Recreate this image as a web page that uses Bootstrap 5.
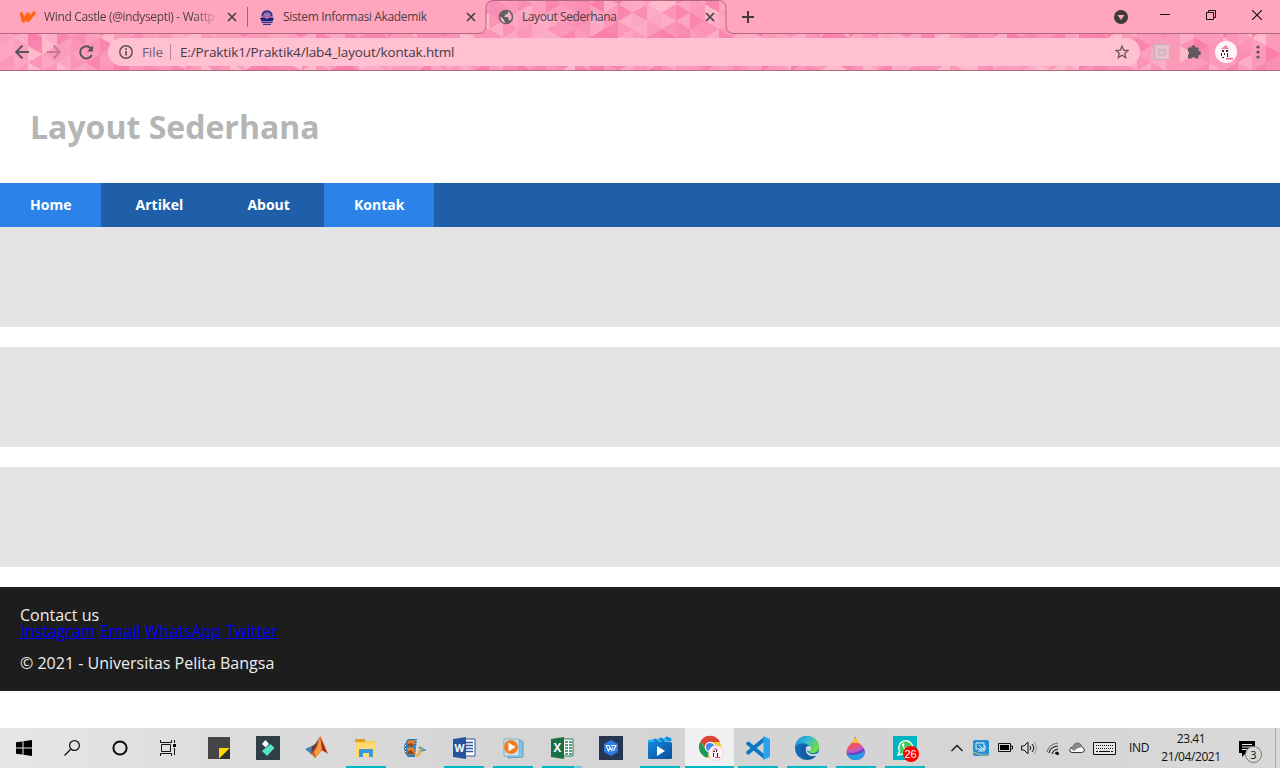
<!DOCTYPE html>
<html lang="id">
<head>
<meta charset="utf-8">
<title>Layout Sederhana</title>
<link href="https://cdn.jsdelivr.net/npm/bootstrap@5.3.0/dist/css/bootstrap.min.css" rel="stylesheet">
<style>
body{width:1280px;height:768px;overflow:hidden;font-family:"Open Sans",sans-serif;background:#fff;color:#000}
svg{display:block;flex:none}
.chrome-ui{height:71px;background:#fc9cba;color:#4a3f45;font-family:"Open Sans",sans-serif;font-size:12px}
.theme-art{z-index:0}
.strip,.toolbar{position:relative;z-index:1}
.strip{height:34px}
.toolbar{height:36px}
.tab-a{width:247px;padding-left:20px}
.tab-b{width:239px;padding-left:11px}
.tab-c{width:240px;padding-left:11px}
.tab-text{white-space:nowrap;overflow:hidden;line-height:18px;letter-spacing:-.34px}
.tab-c .tab-text{letter-spacing:-.42px}
.fade-text{width:175px;-webkit-mask-image:linear-gradient(90deg,#000 150px,transparent 175px)}
.tab-sep{width:1px;height:20px;background:#a0627a}
.omni{width:1032px;height:28px;border-radius:14px;background:#ffc0d2;font-size:13.5px;line-height:28px}
.omni-sep{width:1px;height:16px;background:#b58796}
.page-title{font-size:32px;font-weight:700;color:#b5b5b5;line-height:32px;padding:40px 30px;height:112px}
.site-nav{height:44px;background:#1f5faa;gap:4.2px}
.site-nav a{height:44px;line-height:44px;padding:0 30px;font-size:14px;font-weight:700;color:#fff;text-decoration:none}
.site-nav a.on{background:#2b83ea}
.box{height:100px;background:#e4e4e4;margin-bottom:20px}
.foot{height:104px;padding:20px;background:#1d1d1d;color:#eee;font-size:16px;line-height:16px}
.foot a{color:#00f;text-decoration:underline}
.foot p{margin:16px 0 0}
.taskbar{height:40px;background:linear-gradient(90deg,#e6e6e6,#dedede 15%,#d6d6d6 35%,#d3d3d3 60%,#d8d8d8);color:#111;font-size:12px}
.sys{width:48px}
.app{width:49px;height:40px;position:relative}
.app.run::after{content:"";position:absolute;bottom:0;left:4.5px;width:40px;height:2px;background:#00b7c3}
.app.multi::after{background:linear-gradient(90deg,#00b7c3 32px,#62d2d6 32px)}
.app.live{background:#f0f0f0}
.app.live::after{left:0;width:49px}
.wa-count{position:absolute;left:22px;top:18px;width:16px;height:16px;border-radius:50%;background:#f00;color:#fff;font:11px/16px "Liberation Sans",sans-serif;text-align:center}
.w24{width:24px}.w30{width:30px}
.clock{width:64px;line-height:18px;letter-spacing:-.42px}
.note-count{position:absolute;left:22px;top:18px;width:17px;height:17px;border:1px solid #777;border-radius:50%;background:#d8d8d8;font-size:11px;line-height:15px;text-align:center}
</style>
</head>
<body class="d-flex flex-column m-0">
<header class="chrome-ui position-relative flex-shrink-0">
  <svg class="theme-art position-absolute top-0 start-0" width="1280" height="71">
    <g id="facets" shape-rendering="crispEdges"></g>
    <path d="M-2-2H1282V33.5H734q-8 0-8-8V8.5q0-8-8-8H494q-8 0-8 8V25.5q0 8-8 8H-2z" fill="#ffa6be"/>
    <path d="M1282 33.5H734q-8 0-8-8V8.5q0-8-8-8H494q-8 0-8 8V25.5q0 8-8 8H-2M0 70.5H1280" fill="none" stroke="#b36882"/>
  </svg>
  <div class="strip d-flex align-items-center">
    <div class="tab-a d-flex align-items-center">
      <svg width="16" height="16" viewBox="0 0 16 16"><path d="M1.500 5L3.500 12L8 5L8 11.500L14 4" fill="none" stroke="#ff6512" stroke-width="3.500" stroke-linejoin="round" stroke-linecap="round"/></svg>
      <span class="tab-text fade-text ms-2">Wind Castle (@indysepti) - Wattp</span>
      <svg class="ms-2" width="10" height="10"><path d="M1 1L9 9M9 1L1 9" stroke="#444" stroke-width="1.7"/></svg>
    </div>
    <div class="tab-sep"></div>
    <div class="tab-b d-flex align-items-center">
      <svg width="16" height="16" viewBox="0 0 16 16"><path d="M2 14V7q0-5 6-6.500Q14 2 14 7v7z" fill="#8d7fc0"/><path d="M3.500 7q0-4.500 4.500-4.500T12.500 7" stroke="#253080" fill="none" stroke-width="1.500"/><path d="M7 3.500h2V6H7zM4 7h2v2H4zM10 7h2v2h-2z" fill="#db496b"/><path d="M1 9q4-1 7 1q3-2 7-1l-1.500 3h-11z" fill="#202478"/><path d="M3 13.500h10M4 15.300h8" stroke="#3b3788" stroke-width="1.200"/></svg>
      <span class="tab-text ms-2" style="width:175px">Sistem Informasi Akademik</span>
      <svg class="ms-2" width="10" height="10"><path d="M1 1L9 9M9 1L1 9" stroke="#444" stroke-width="1.7"/></svg>
    </div>
    <div class="tab-c d-flex align-items-center">
      <svg width="16" height="16" viewBox="0 0 16 16"><circle cx="8" cy="8" r="7.300" fill="#606063"/><path d="M10 2.200V4L8.500 5.500H7V7L5.800 8H9.500l1 1v2l1.800.5Q14 9.500 13.700 7.200 13 3.500 10 2.200zM2.300 7.200L6 10.800V12l1.200 1V14Q2 13 2.300 7.200z" fill="#f9b1c8"/></svg>
      <span class="tab-text ms-2" style="width:175px">Layout Sederhana</span>
      <svg class="ms-2" width="10" height="10"><path d="M1 1L9 9M9 1L1 9" stroke="#444" stroke-width="1.7"/></svg>
    </div>
    <svg style="margin-left:15px" width="12" height="12"><path d="M6 0V12M0 6H12" stroke="#443b40" stroke-width="2"/></svg>
    <div class="d-flex align-items-center ms-auto">
      <svg width="14" height="14"><circle cx="7" cy="7" r="7" fill="#3e3b3d"/><path d="M3.500 5h7L7 10z" fill="#ffa6be"/></svg>
      <svg style="margin:0 36px 5px 32px" width="10" height="11"><path d="M0 5.500H10" stroke="#111"/></svg>
      <svg style="margin:0 36px 5px 0" width="10" height="10"><path d="M.5 2.500H7.500V9.500H.5zM2.500 2V.5H9.500V7.500H8" fill="none" stroke="#111"/></svg>
      <svg style="margin:0 18px 5px 0" width="10" height="10"><path d="M0 0L10 10M10 0L0 10" stroke="#111" stroke-width="1.100"/></svg>
    </div>
  </div>
  <div class="toolbar d-flex align-items-center">
    <svg style="margin-left:15px" width="14" height="14"><path d="M14 7H1M7.500.5L1 7l6.500 6.500" fill="none" stroke="#58535a" stroke-width="1.900"/></svg>
    <svg style="margin-left:18px" width="14" height="14"><path d="M0 7H13M6.500.5L13 7l-6.500 6.500" fill="none" stroke="#c77793" stroke-width="1.900"/></svg>
    <svg style="margin-left:18px" width="15" height="15"><path d="M12.800 10A6.100 6.100 0 1 1 11.800 3.200" fill="none" stroke="#58535a" stroke-width="2"/><path d="M14 .5V6.500H8z" fill="#58535a"/></svg>
    <div class="omni d-flex align-items-center" style="margin-left:14px">
      <svg style="margin-left:11px" width="14" height="14"><circle cx="7" cy="7" r="6.200" fill="none" stroke="#5e5058" stroke-width="1.500"/><path d="M7 6V10.500M7 3.300V5" stroke="#5e5058" stroke-width="1.700"/></svg>
      <span style="margin-left:9px;width:28px;color:#71616a;letter-spacing:-.1px">File</span>
      <div class="omni-sep"></div>
      <span style="margin-left:9px;color:#463b42;letter-spacing:-.14px">E:/Praktik1/Praktik4/lab4_layout/kontak.html</span>
      <svg class="ms-auto" style="margin-right:11px" width="14" height="14" viewBox="0 0 14 14"><path d="M7 1.200L8.700 5.100L13 5.500L9.800 8.300L10.700 12.600L7 10.300L3.300 12.600L4.200 8.300L1 5.500L5.300 5.100z" fill="none" stroke="#67575f" stroke-width="1.300"/></svg>
    </div>
    <svg style="margin-left:14px" width="16" height="16"><path d="M.5.5H15.500V15.500H.5z" fill="#e9c1cd" stroke="#bfb4b8"/><path d="M5 5l3 1.500L11 5v5L8 11.500 5 10z" fill="none" stroke="#cbb8be" stroke-width="1.500"/></svg>
    <svg style="margin-left:16px" width="16" height="16" viewBox="0 0 16 16"><path d="M2 3.500h3.500a1.900 1.900 0 1 1 3.700 0H12.500V7a2 2 0 1 1 0 3.900V14.500H9.300a2.200 2.200 0 0 0-4 0H2V11a2.200 2.200 0 0 0 0-3.800z" fill="#5e595e"/></svg>
    <svg style="margin-left:13px" width="22" height="22"><circle cx="11" cy="11" r="11" fill="#fff4f8"/><path d="M6 8L11 4l3 4z" fill="#f283ac"/><path d="M7 9h2v2H7zM11 9h2v2h-2zM6 12h1v3H6zM9 12h1v2H9zM12 12h1v4h-1zM7 16h2v1H7z" fill="#2a2228"/><path d="M11 17h7v1.500h-7z" fill="#e9669c"/></svg>
    <svg style="margin-left:19px" width="4" height="14"><circle cx="2" cy="2" r="1.600" fill="#58535a"/><circle cx="2" cy="7" r="1.600" fill="#58535a"/><circle cx="2" cy="12" r="1.600" fill="#58535a"/></svg>
  </div>
</header>

<main class="flex-grow-1">
  <h1 class="page-title m-0">Layout Sederhana</h1>
  <nav class="site-nav d-flex"><a class="on" href="#">Home</a><a href="#">Artikel</a><a href="#">About</a><a class="on" href="#">Kontak</a></nav>
  <div class="box"></div><div class="box"></div><div class="box"></div>
  <footer class="foot">
    <div>Contact us</div>
    <div style="word-spacing:.2px"><a href="#">Instagram</a> <a href="#">Email</a> <a href="#">WhatsApp</a> <a href="#">Twitter</a></div>
    <p>© 2021 - Universitas Pelita Bangsa</p>
  </footer>
</main>

<div class="taskbar d-flex align-items-center flex-shrink-0">
  <div class="sys d-flex justify-content-center"><svg width="16" height="16"><path d="M0 2.300L6.500 1.400V7.500H0zM7.500 1.200L16 0V7.500H7.500zM0 8.500H6.500V14.600L0 13.700zM7.500 8.500H16V16L7.500 14.800z"/></svg></div>
  <div class="sys d-flex justify-content-center"><svg width="16" height="16"><circle cx="10.500" cy="5.500" r="4.900" fill="none" stroke="#111" stroke-width="1.200"/><path d="M7 9L.5 15.500" stroke="#111" stroke-width="1.300"/></svg></div>
  <div class="sys d-flex justify-content-center"><svg width="16" height="16"><circle cx="8" cy="8" r="6.600" fill="none" stroke="#0a0a0a" stroke-width="2"/></svg></div>
  <div class="sys d-flex justify-content-center" style="margin-right:2.5px"><svg width="17" height="16"><path d="M.5 0V2.500H11.500V0M1.500 4.500H10.500V11.500H1.500zM.5 16V13.500H11.500V16M14.500 0V3M14.500 8V15" fill="none" stroke="#111"/><path d="M13 4h3v3h-3z"/></svg></div>

  <div class="app d-flex align-items-center justify-content-center"><svg width="22" height="22"><path d="M0 0H22V22H0z" fill="#454545"/><path d="M11 11H22L11 22z" fill="#ffd800"/><path d="M22 11V22H11z" fill="#303030"/></svg></div>
  <div class="app d-flex align-items-center justify-content-center"><svg width="24" height="24"><path d="M0 0H24V24H0z" fill="#303e47"/><path d="M9.500 4L13 8 9.500 11.500 6 8z" fill="#fff"/><path d="M14.500 8l4 4-7.500 8-5-5z" fill="#55e5c5"/></svg></div>
  <div class="app d-flex align-items-center justify-content-center"><svg width="24" height="24"><path d="M0 13L7 10l4 3-5 5z" fill="#4385b8"/><path d="M7 10q4-1 7-9l-3 13-5 5z" fill="#693c3e"/><path d="M15 0q3 5 8 18l-6-4-7 8-4-5q5-3 9-17z" fill="#d95722"/><path d="M15 1l2 12-6 8-2-5q4-4 6-15z" fill="#f3a23b"/><path d="M16 3q3 8 6 14l-5-3z" fill="#a92819"/></svg></div>
  <div class="app run d-flex align-items-center justify-content-center"><svg width="22" height="20"><path d="M1 1H9l2 2H21V19H1z" fill="#f9cf59"/><path d="M0 1H10V4H0z" fill="#dda221"/><path d="M1 5H21V19H1z" fill="#ffda73"/><path d="M4 11H18V19H14V15H8V19H4z" fill="#3b98dd"/></svg></div>
  <div class="app d-flex align-items-center justify-content-center"><svg width="24" height="20"><path d="M5 1H14L12 19H5Q-3 10 5 1z" fill="#297eb1"/><path d="M5 2.500h7L11 8H4zM4 9.500h7l1 7H5z" fill="#f47b21"/><path d="M5 6l3-1 3 2-1 1H4zM5 13l3-1 3 3v1H5z" fill="#9b451e"/><path d="M2.500 4v12M13 2v15" stroke="#d8eef5" stroke-dasharray="1 2"/><path d="M13 18q5-1 4-9" fill="none" stroke="#eaaa45" stroke-width="2.500"/><path d="M16 9l6 3-4 1" fill="none" stroke="#5197bd" stroke-width="1.500"/></svg></div>
  <div class="app run d-flex align-items-center justify-content-center"><svg width="24" height="24"><path d="M13 3H23V20H13z" fill="#fff" stroke="#3158a0"/><path d="M14 6.500h7M14 9.500h7M14 12.500h7M14 15.500h7" stroke="#3158a0" stroke-width="1.300"/><path d="M1 3L14 1V23L1 21z" fill="#26549d"/><text x="2.500" y="16" font-size="11" font-weight="700" fill="#fff" font-family="Open Sans" textLength="10" lengthAdjust="spacingAndGlyphs">W</text></svg></div>
  <div class="app run d-flex align-items-center justify-content-center"><svg width="24" height="22"><path d="M7 3h12l3 2v15l-15 1z" fill="#85c2e1" stroke="#5c9fc5"/><path d="M3 2h15v17H3z" fill="#cee2ef" stroke="#85afc8"/><circle cx="10" cy="10" r="7" fill="#f47c1e"/><path d="M7.500 5.500l7 4.500-7 4.500z" fill="#fff"/></svg></div>
  <div class="app run multi d-flex align-items-center justify-content-center"><svg width="24" height="24"><path d="M13 3H23V20H13z" fill="#fff" stroke="#278055"/><path d="M15 6h3M19 6h3M15 9h3M19 9h3M15 12h3M19 12h3M15 15h3M19 15h3M15 18h3M19 18h3" stroke="#278055" stroke-width="1.500"/><path d="M1 3L14 1V23L1 21z" fill="#197044"/><text x="3.500" y="16" font-size="11.500" font-weight="700" fill="#fff" font-family="Open Sans">X</text></svg></div>
  <div class="app d-flex align-items-center justify-content-center"><svg width="24" height="24"><path d="M0 0H24V24H0z" fill="#263652"/><path d="M12 4l7 4v8l-7 4-7-4V8z" fill="#2b7be8"/><path d="M7 9.500h3l2.500 5L14 11M7 9.500l2.500 5.500 2-4M12 9.500h5L14.500 15" fill="none" stroke="#fff" stroke-width="1.100"/></svg></div>
  <div class="app run d-flex align-items-center justify-content-center"><svg width="24" height="24"><defs><linearGradient id="gm" x2="1" y2="1"><stop stop-color="#1388dc"/><stop offset="1" stop-color="#0c4c9c"/></linearGradient></defs><path d="M0 4L23 1l1 4-24 3z" fill="#2bb4f1"/><path d="M6 3l4 4M12 2l4 4M18 1l4 4" stroke="#1378c9" stroke-width="2"/><rect y="6" width="24" height="17" rx="1.500" fill="url(#gm)"/><path d="M9 10v10l8-5z" fill="#fff"/></svg></div>
  <div class="app run live d-flex align-items-center justify-content-center"><svg width="26" height="26" style="margin-left:3px"><circle cx="12" cy="12" r="11" fill="#f2c931"/><path d="M2.500 6.500A11 11 0 0 1 22 7H12L8 14z" fill="#db4437"/><path d="M2.500 6.500L8 15l4 2-3 5.700A11 11 0 0 1 2.500 6.500z" fill="#199a58"/><circle cx="12" cy="12" r="5.200" fill="#fff"/><circle cx="12" cy="12" r="4.100" fill="#4285f4"/><circle cx="18" cy="18" r="7.500" fill="#fff1f7" stroke="#d5cbd0" stroke-width=".5"/><path d="M14 15.500l4-3 2 2.500z" fill="#ef80ac"/><path d="M15 16h2v1h-2zM18 15h1v2h-1zM15 18h1v4h-1zM19 18h1v4h-1z" fill="#392a33"/><path d="M17 22h5v1h-5z" fill="#ec5291"/></svg></div>
  <div class="app run d-flex align-items-center justify-content-center"><svg width="24" height="24"><path d="M2.200 7.500L18 20.500M2.200 16.500L18 3.500" stroke="#0a79c2" stroke-width="4" stroke-linecap="round"/><path d="M17.500 0L24 3v18l-6.500 3z" fill="#27a4ef"/></svg></div>
  <div class="app run d-flex align-items-center justify-content-center"><svg width="24" height="24"><defs><linearGradient id="ge" x2="1" y2=".5"><stop stop-color="#1689d7"/><stop offset=".5" stop-color="#32b9d3"/><stop offset="1" stop-color="#73dc47"/></linearGradient></defs><circle cx="12" cy="12" r="12" fill="#116bb8"/><path d="M0 11C1 3 7 0 12 0c8 0 12 6 12 11 0 4-4 7-8 6q-4-1-1-4c1-5-9-9-15-2z" fill="url(#ge)"/><path d="M11 8c-4 4 0 11 11 10-3 5-7 6-11 5-9-5-6-15 0-15z" fill="#135ca3"/><path d="M13 10q-3 2-1 5 3 5 12 2l-1 2-2 .8q-7 1.500-9.500-3-2-4 1.500-6.800z" fill="#d6dbdc"/><circle cx="13.500" cy="12.500" r="2.500" fill="#d6dbdc"/></svg></div>
  <div class="app run d-flex align-items-center justify-content-center"><svg width="20" height="24"><defs><clipPath id="drop"><path d="M9 0Q10 4 16 10c6 7 1 14-6 14S-2 18 2 11Q8 5 9 0z"/></clipPath></defs><g clip-path="url(#drop)"><path d="M0 0H20V24H0z" fill="#ed5268"/><path d="M7 0l12 12q-4-6-14-5z" fill="#ffc531"/><path d="M0 14q10 0 19-8v12H0z" fill="#c15bbd"/><path d="M0 17q13 1 20-7v14H0z" fill="#6a45c0"/><path d="M0 18q12 3 20-4v10H0z" fill="#22a1e4"/></g></svg></div>
  <div class="app run d-flex align-items-center justify-content-center"><svg width="24" height="24"><path d="M0 0H24V24H0z" fill="#00b5c1"/><path d="M5 19l1.500-4a7 7 0 1 1 3 3z" fill="#43c960" stroke="#e8fff0" stroke-width="1.500"/><path d="M9 8q0 5 6 7l1-2-2-1-1 1-2-2 .5-2L10.500 7z" fill="#fff"/></svg><span class="wa-count">26</span></div>

  <div class="d-flex align-items-center" style="margin-left:15.5px">
    <div class="w24 d-flex justify-content-center"><svg width="12" height="8"><path d="M.5 7L6 1.500 11.500 7" fill="none" stroke="#111" stroke-width="1.300"/></svg></div>
    <div class="w24 d-flex justify-content-center"><svg width="16" height="16"><rect width="16" height="16" rx="2" fill="#248fd2"/><path d="M3 3h8v6H3zM5 11h6M8 9v2M6 5l6 6M11 5q3 3 0 6" fill="none" stroke="#d9f1ff"/><path d="M0 12q7 4 15 3" stroke="#d8bc69" fill="none"/></svg></div>
    <div class="w24 d-flex justify-content-center"><svg width="15" height="10"><path d="M.5.5H12.500V8.500H.5zM13 3h1.500v3H13" fill="none" stroke="#111"/><path d="M2 2h9v5H2z"/></svg></div>
    <div class="w24 d-flex justify-content-center"><svg width="16" height="14"><path d="M.5 5H3l4-4v12L3 9H.5zM9 5q1.500 2 0 4M11 3q3.500 4 0 8" fill="none" stroke="#111"/><path d="M13 1q5 6 0 12" fill="none" stroke="#999"/></svg></div>
    <div class="w24 d-flex justify-content-center"><svg width="14" height="14"><g fill="none" stroke="#222" stroke-width="1.200"><path d="M1 11Q3 3 12 2" stroke="#777"/><path d="M3 12Q4 6 12 5M6 13Q7 9 12 8"/><path d="M9 13q.5-2 3-2"/></g><circle cx="11.500" cy="12.500" r="1.500"/></svg></div>
    <div class="w24 d-flex justify-content-center"><svg width="16" height="12"><path d="M3 10.500Q0 10 .7 7.500 1.500 5 4 5 5 1 8.500 1T13 5q2.500 1 2.300 3.300T12.500 10.500z" fill="#fafafa" stroke="#333"/><path d="M1.500 6.500L4 5q1-4 4.500-4T13 5L8 6.500 5 9z" fill="#888"/></svg></div>
    <div class="w30 d-flex justify-content-center"><svg width="23" height="13"><path d="M.5.5H22.500V12.500H.5z" fill="#e6e6e6" stroke="#111"/><path d="M3 3.500H20M3 6.500H20" stroke="#111" stroke-dasharray="1 1"/><path d="M3 9.500h2M6 9.500h11M18 9.500h2" stroke="#111"/></svg></div>
    <div class="text-center" style="width:40px;letter-spacing:-.3px">IND</div>
    <div class="clock text-center">23.41<br>21/04/2021</div>
    <div class="position-relative d-flex align-items-center" style="width:52px;height:40px;padding-left:16px"><svg width="16" height="17"><path d="M0 1H16V13H7l-4 4v-4H0z"/><path d="M3 4.500H13M3 7H13M3 9.500H10" stroke="#eee"/></svg><span class="note-count">3</span></div>
    <div style="width:1px;height:40px;background:#aaa"></div>
  </div>
</div>
<script src="https://cdn.jsdelivr.net/npm/bootstrap@5.3.0/dist/js/bootstrap.bundle.min.js"></script>
<script>
// Triangular facets of the browser theme, in columns 14.4px wide
let seed = 11;
const rnd = () => (seed = (seed * 16807) % 2147483647) / 2147483647;
const tones = ['#fb7fac','#fa8db3','#fc99b9','#fb94b6','#fda6c1','#fc9fbd','#f986af','#fdacc5','#fc9aba','#feb9cb'];
const w = 14.4, h = 16.6;
let out = '';
for (let c = 0; c < 91; c++) {
  const x = c * w - 0.8, x2 = x + w, off = c % 2 ? h / 2 : 0;
  for (let r = -1; r < 6; r++) {
    const y = r * h + off - 4;
    out += `<path d="M${x} ${y}V${y + h}L${x2} ${y + h / 2}z" fill="${tones[Math.floor(rnd() * 10)]}"/>`;
    out += `<path d="M${x2} ${y + h / 2}V${y + 1.5 * h}L${x} ${y + h}z" fill="${tones[Math.floor(rnd() * 10)]}"/>`;
  }
}
document.getElementById('facets').innerHTML = out;
</script>
</body>
</html>
